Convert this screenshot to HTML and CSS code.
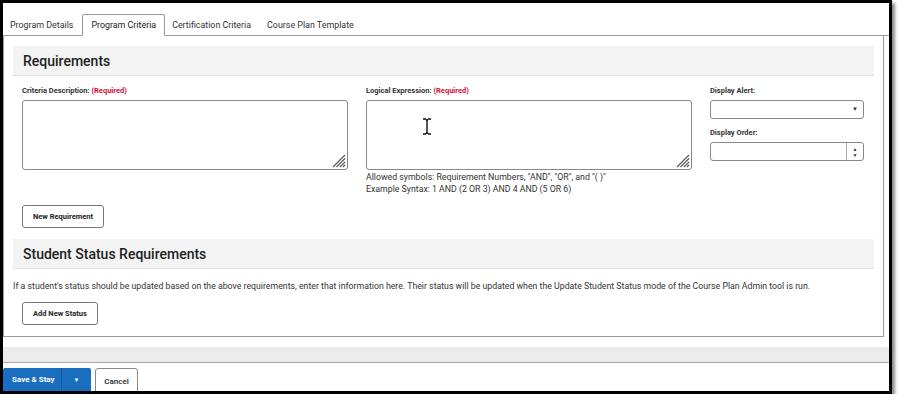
FILE: index.html
```html
<!DOCTYPE html>
<html lang="en">
<head>
  <meta charset="UTF-8" />
  <title>Program Criteria</title>
  <link rel="stylesheet" href="styles.css">
</head>
<body>
  <div class="frame">
    <div class="tabs">
      <div class="tab">Program Details</div>
      <div class="tab active">Program Criteria</div>
      <div class="tab">Certification Criteria</div>
      <div class="tab">Course Plan Template</div>
    </div>

    <div class="panel">
      <div class="section-head">Requirements</div>

      <div class="form-row">
        <div class="field wide">
          <label class="lbl">Criteria Description: <span class="req">(Required)</span></label>
          <div class="area">
            <textarea></textarea>
            <svg class="grip" width="16" height="16" viewBox="0 0 16 16">
              <path d="M15 3 L3 15 M15 6.5 L6.5 15 M15 10 L10 15 M15 13 L13 15" stroke="#555" stroke-width="1.1" />
            </svg>
          </div>
        </div>
        <div class="field wide">
          <label class="lbl">Logical Expression: <span class="req">(Required)</span></label>
          <div class="area">
            <textarea></textarea>
            <svg class="grip" width="16" height="16" viewBox="0 0 16 16">
              <path d="M15 3 L3 15 M15 6.5 L6.5 15 M15 10 L10 15 M15 13 L13 15" stroke="#555" stroke-width="1.1" />
            </svg>
            <svg class="ibeam" width="10" height="17" viewBox="0 0 10 17">
              <path d="M1 1 H4 M6 1 H9 M4 1.5 Q5 2 5 3 V14 Q5 15 4 15.5 M6 1.5 Q5 2 5 3 M5 14 Q5 15 6 15.5 M1 16 H4 M6 16 H9" stroke="#111" stroke-width="1.4" fill="none" />
            </svg>
          </div>
          <p class="hint">Allowed symbols: Requirement Numbers, "AND", "OR", and "( )"</p>
          <p class="hint">Example Syntax: 1 AND (2 OR 3) AND 4 AND (5 OR 6)</p>
        </div>
        <div class="field narrow">
          <label class="lbl">Display Alert:</label>
          <div class="select"><span class="caret">&#9660;</span></div>
          <label class="lbl second">Display Order:</label>
          <div class="number">
            <span class="spin"><span>&#9650;</span><span>&#9660;</span></span>
          </div>
        </div>
      </div>

      <button class="btn">New Requirement</button>

      <div class="section-head">Student Status Requirements</div>
      <p class="info">If a student's status should be updated based on the above requirements, enter that information here. Their status will be updated when the Update Student Status mode of the Course Plan Admin tool is run.</p>
      <button class="btn">Add New Status</button>
    </div>

    <div class="strip"></div>

    <div class="footer">
      <div class="save">
        <span class="save-main">Save &amp; Stay</span>
        <span class="save-menu">&#9660;</span>
      </div>
      <button class="cancel">Cancel</button>
    </div>
  </div>
</body>
</html>
```

FILE: styles.css
```css
* { box-sizing: border-box; }
body {
  margin: 0;
  background: #fff;
  font-family: Roboto, "Liberation Sans", sans-serif;
  color: #333;
}
.frame {
  width: 892px;
  height: 394px;
  border: 3px solid #000;
  box-shadow: 3px 3px 3px rgba(0, 0, 0, 0.45);
  overflow: hidden;
  background: #fff;
}
.tabs {
  display: flex;
  align-items: flex-end;
  height: 33px;
  border-bottom: 1px solid #999;
}
.tab {
  height: 21px;
  padding: 0 9px 0 7px;
  font-size: 8.9px;
  line-height: 21px;
  color: #333;
  margin-bottom: -1px;
}
.tab.active {
  background: #fff;
  border: 1px solid #999;
  border-bottom: 1px solid #fff;
  border-radius: 2px 2px 0 0;
  height: 22px;
  padding: 0 8px;
  color: #222;
}
.panel {
  width: 881px;
  border: 1px solid #999;
  border-top: 0;
  padding: 10px 9px 11px 9px;
}
.section-head {
  height: 30px;
  background: #f3f3f3;
  border-bottom: 1px solid #e2e2e2;
  padding-left: 10px;
  font-size: 14px;
  font-weight: 500;
  line-height: 30px;
  color: #222;
}
.form-row {
  display: flex;
  gap: 18px;
  padding: 10px 9px 0;
}
.field.wide { width: 326px; }
.field.narrow { width: 154px; }
.lbl {
  display: block;
  height: 14px;
  font-size: 7.5px;
  font-weight: 700;
  color: #333;
}
.lbl.second { margin-top: 9px; }
.req { color: #d0103a; }
.area {
  position: relative;
  height: 70px;
}
textarea {
  display: block;
  width: 100%;
  height: 100%;
  border: 1px solid #888;
  border-radius: 3px;
  resize: none;
  margin: 0;
}
.grip {
  position: absolute;
  right: 2px;
  bottom: 2px;
}
.ibeam {
  position: absolute;
  left: 56px;
  top: 18px;
}
.hint {
  margin: 0;
  font-size: 8.75px;
  line-height: 12px;
  color: #333;
}
.hint:first-of-type { margin-top: 1px; }
.select,
.number {
  position: relative;
  height: 19px;
  border: 1px solid #888;
  border-radius: 3px;
}
.caret {
  position: absolute;
  right: 5px;
  top: 4px;
  font-size: 6px;
  color: #333;
}
.spin {
  position: absolute;
  right: 0;
  top: 0;
  width: 17px;
  height: 17px;
  border-left: 1px solid #aaa;
  display: flex;
  flex-direction: column;
  align-items: center;
  justify-content: center;
  font-size: 5px;
  line-height: 6px;
  color: #333;
}
.btn {
  display: block;
  height: 23px;
  margin: 10px 0 11px 9px;
  padding: 0 10px;
  background: #fff;
  border: 1px solid #777;
  border-radius: 3px;
  font-family: inherit;
  font-size: 7.5px;
  font-weight: 700;
  color: #222;
}
.info {
  margin: 11px 0 10px;
  font-size: 8.75px;
  line-height: 12px;
  color: #333;
}
.info + .btn { margin-top: 0; margin-bottom: 0; }
.strip {
  margin-top: 10px;
  height: 16px;
  background: #ececec;
  border-bottom: 1px solid #aaa;
}
.footer {
  display: flex;
  gap: 4px;
  padding-top: 5px;
}
.save {
  display: flex;
  height: 26px;
  background: #1a6ec0;
  color: #fff;
  font-size: 8px;
  font-weight: 700;
  border-radius: 2px;
}
.save-main {
  width: 59px;
  padding-left: 9px;
  line-height: 24px;
  border-right: 1px solid #155a9e;
}
.save-menu {
  width: 29px;
  text-align: center;
  font-size: 6px;
  line-height: 24px;
}
.cancel {
  height: 26px;
  width: 43px;
  padding: 0;
  background: #fff;
  border: 1px solid #888;
  border-radius: 3px;
  font-family: inherit;
  font-size: 8px;
  font-weight: 500;
  color: #222;
}
```
